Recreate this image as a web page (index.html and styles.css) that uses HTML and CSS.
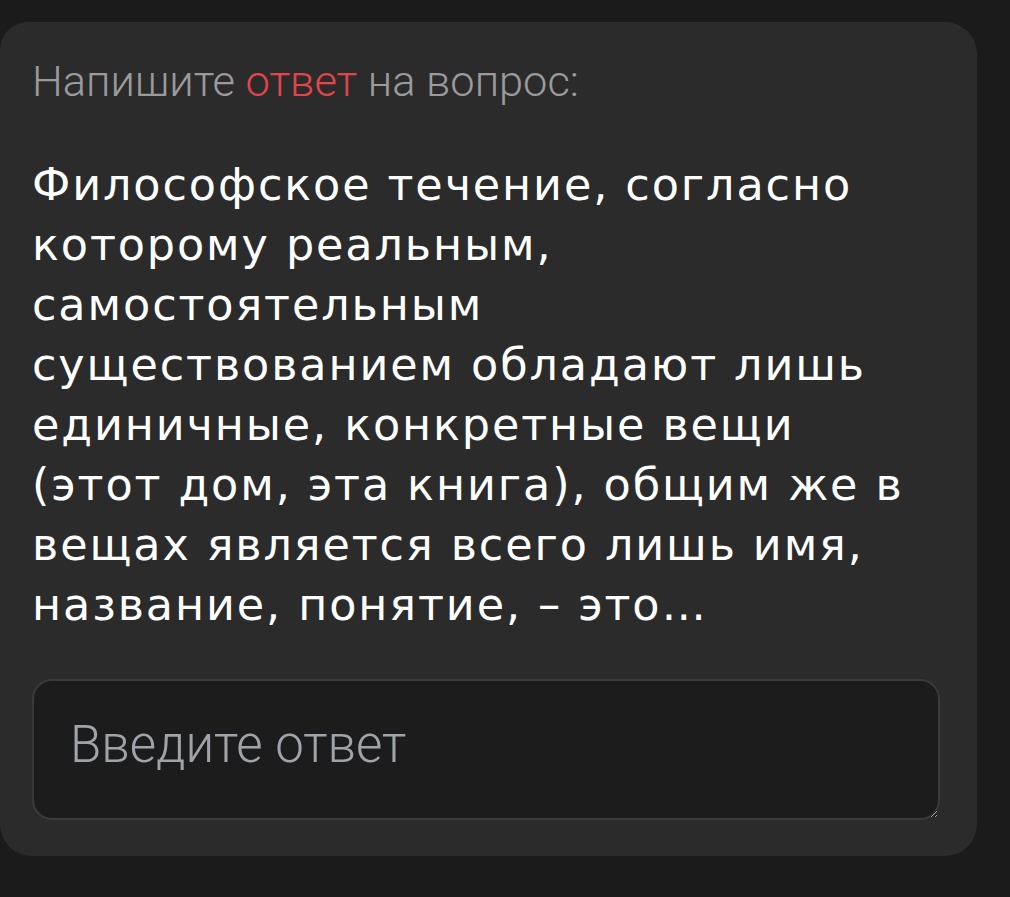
FILE: index.html
```html
<!DOCTYPE html>
<html lang="ru">
<head>
    <meta charset="UTF-8">
    <meta name="viewport" content="width=device-width, initial-scale=1.0">
    <title>Вопрос</title>
    <link rel="stylesheet" href="styles.css">
</head>
<body>
    <div class="card">
        <p class="hint">Напишите <span class="accent">ответ</span> на вопрос:</p>
        <p class="question">Философское течение, согласно которому реальным, самостоятельным существованием обладают лишь единичные, конкретные вещи (этот дом, эта книга), общим же в вещах является всего лишь имя, название, понятие, – это…</p>
        <textarea class="answer" placeholder="Введите ответ"></textarea>
    </div>
</body>
</html>
```

FILE: styles.css
```css
body {
    margin: 0;
    padding-top: 22px;
    background-color: #1b1b1b;
    font-family: "DejaVu Sans", sans-serif;
}

.card {
    width: 977px;
    box-sizing: border-box;
    background-color: #2b2b2b;
    border-radius: 28px 32px 32px 32px;
    padding: 35px 37px 36px 32px;
    display: flex;
    flex-direction: column;
}

.hint {
    margin: 0;
    font-family: "Roboto", sans-serif;
    font-weight: 300;
    font-size: 43.4px;
    line-height: 50px;
    color: #9b9b9b;
}
.hint .accent {
    color: #e2454c;
}

.question {
    margin: 48px 0 0 0;
    max-width: 876px;
    font-size: 44.5px;
    letter-spacing: 1.9px;
    line-height: 60px;
    color: #ffffff;
}

.answer {
    margin-top: 44px;
    height: 141px;
    box-sizing: border-box;
    background-color: #1c1c1c;
    border: 2px solid #3a3a3a;
    border-radius: 20px;
    padding: 34px 36px;
    font-family: "Roboto", sans-serif;
    font-weight: 300;
    font-size: 51px;
    color: #fff;
    outline: none;
    resize: vertical;
}
.answer::placeholder {
    color: #a0a3a8;
}
```
